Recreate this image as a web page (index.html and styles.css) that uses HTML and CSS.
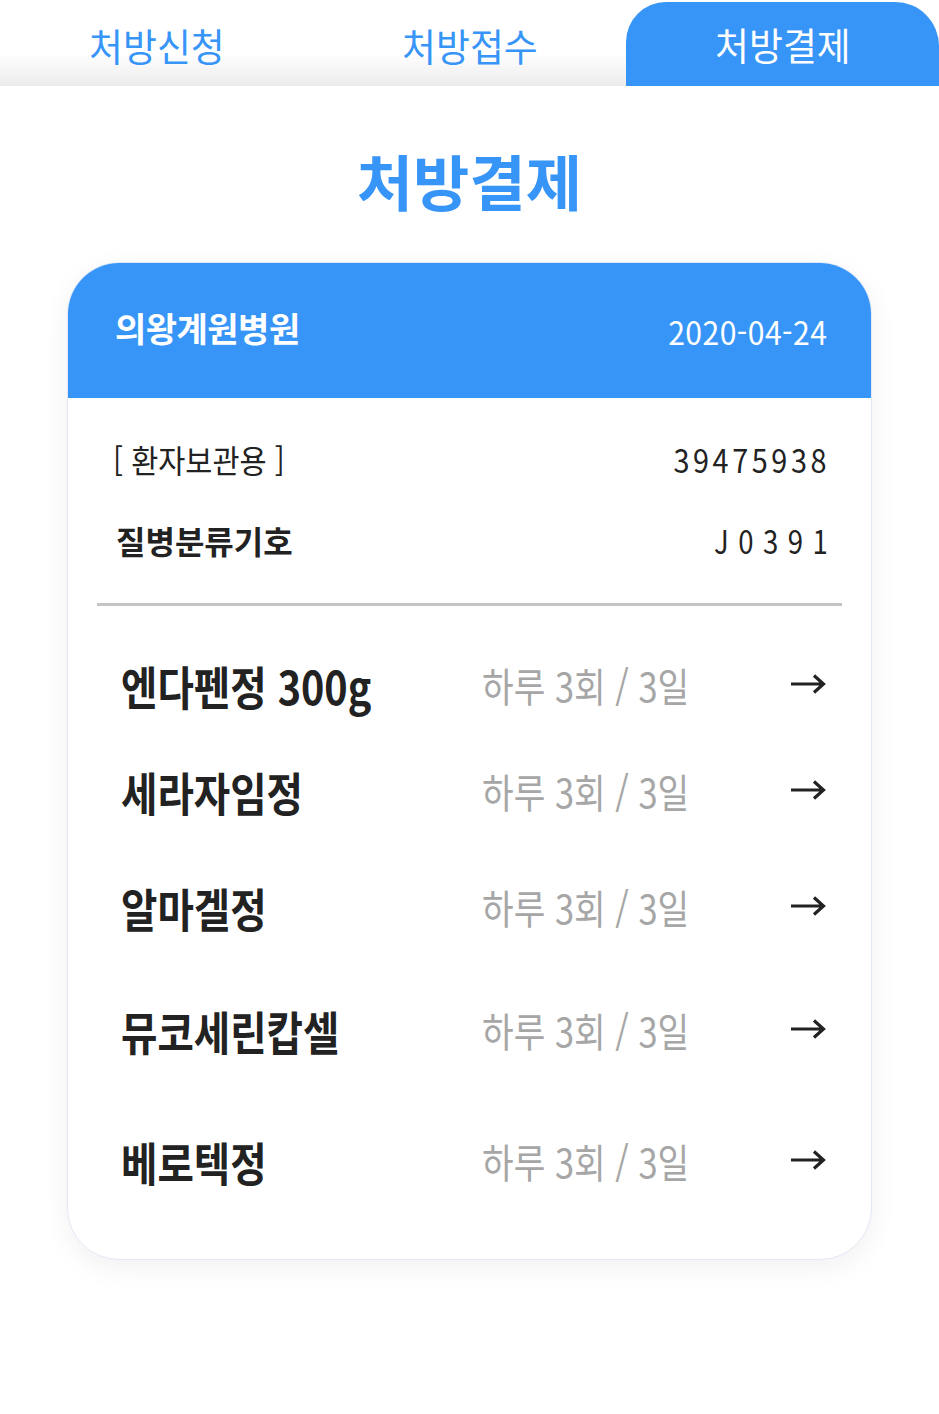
FILE: index.html
```html
<!DOCTYPE html>
<html lang="ko">
<head>
<meta charset="utf-8">
<link rel="stylesheet" href="styles.css">
</head>
<body>
<nav class="tabs">
  <div class="tab"><span class="sq">처방신청</span></div>
  <div class="tab"><span class="sq">처방접수</span></div>
  <div class="tab active"><span class="sq">처방결제</span></div>
</nav>
<h1 class="title"><span class="sq">처방결제</span></h1>
<section class="card">
  <header class="card-head">
    <span class="hosp">의왕계원병원</span>
    <span class="date sq-r">2020-04-24</span>
  </header>
  <div class="info">
    <div class="info-row">
      <span class="label sq-l">[ 환자보관용 ]</span>
      <span class="value num sq-r">39475938</span>
    </div>
    <div class="info-row">
      <span class="label strong">질병분류기호</span>
      <span class="value code sq-r">J0391</span>
    </div>
  </div>
  <hr class="divider">
  <ul class="meds">
    <li class="med r1"><span class="name sq-l">엔다펜정 300g</span><span class="dose sq-l">하루 3회 / 3일</span><svg class="arrow" viewBox="0 0 36 22" width="36" height="22"><path d="M1 11H33M24 2.5L33.5 11L24 19.5" fill="none" stroke="#222" stroke-width="3.2" stroke-linejoin="miter"/></svg></li>
    <li class="med r2"><span class="name sq-l">세라자임정</span><span class="dose sq-l">하루 3회 / 3일</span><svg class="arrow" viewBox="0 0 36 22" width="36" height="22"><path d="M1 11H33M24 2.5L33.5 11L24 19.5" fill="none" stroke="#222" stroke-width="3.2" stroke-linejoin="miter"/></svg></li>
    <li class="med r3"><span class="name sq-l">알마겔정</span><span class="dose sq-l">하루 3회 / 3일</span><svg class="arrow" viewBox="0 0 36 22" width="36" height="22"><path d="M1 11H33M24 2.5L33.5 11L24 19.5" fill="none" stroke="#222" stroke-width="3.2" stroke-linejoin="miter"/></svg></li>
    <li class="med r4"><span class="name sq-l">뮤코세린캅셀</span><span class="dose sq-l">하루 3회 / 3일</span><svg class="arrow" viewBox="0 0 36 22" width="36" height="22"><path d="M1 11H33M24 2.5L33.5 11L24 19.5" fill="none" stroke="#222" stroke-width="3.2" stroke-linejoin="miter"/></svg></li>
    <li class="med r5"><span class="name sq-l">베로텍정</span><span class="dose sq-l">하루 3회 / 3일</span><svg class="arrow" viewBox="0 0 36 22" width="36" height="22"><path d="M1 11H33M24 2.5L33.5 11L24 19.5" fill="none" stroke="#222" stroke-width="3.2" stroke-linejoin="miter"/></svg></li>
  </ul>
</section>
</body>
</html>
```
FILE: styles.css
```css
* { box-sizing: border-box; }
html, body { margin: 0; padding: 0; background: #fff; }
body {
  width: 939px;
  height: 1414px;
  font-family: "Noto Sans CJK KR", "Noto Sans", sans-serif;
  color: #222;
  overflow: hidden;
}
.sq, .sq-l, .sq-r { display: inline-block; transform: scaleX(0.86); }
.sq { transform-origin: center; }
.sq-l { transform-origin: left center; }
.sq-r { transform-origin: right center; }

.tabs {
  display: grid;
  grid-template-columns: 313px 313px 313px;
  height: 86px;
  background: linear-gradient(#ffffff 0%, #ffffff 62%, #ebebeb 100%);
}
.tab {
  display: flex;
  align-items: center;
  justify-content: center;
  padding-top: 4px;
  font-size: 38px;
  color: #3895f8;
  line-height: 1;
}
.tab .sq { transform: scaleX(0.97); }
.tab.active {
  margin-top: 2px;
  background: #3895f8;
  color: #fff;
  border-radius: 40px 44px 0 0 / 40px 44px 0 0;
  padding-top: 0;
}

.title {
  margin: 62px 0 0;
  text-align: center;
  font-size: 60px;
  font-weight: 700;
  color: #3895f8;
  line-height: 64px;
  height: 64px;
}
.title .sq { transform: scaleX(1.02); }

.card {
  margin: 50px 0 0 67px;
  width: 805px;
  height: 998px;
  border: 1px solid #e2e8f7;
  border-radius: 52px;
  box-shadow: 0 8px 28px rgba(0,0,0,0.06);
  overflow: hidden;
  background: #fff;
}
.card-head {
  height: 135px;
  background: #3895f8;
  color: #fff;
  display: flex;
  align-items: center;
  justify-content: space-between;
  padding: 0 44px 0 47px;
}
.hosp { font-size: 34px; font-weight: 700; margin-top: -6px; letter-spacing: -0.5px; }
.date { font-size: 32px; font-weight: 400; letter-spacing: 0.5px; transform: scaleX(0.94); }

.info { padding: 31px 45px 0 45px; }
.info-row {
  display: flex;
  justify-content: space-between;
  align-items: center;
  height: 60px;
  margin-bottom: 21px;
}
.label { font-size: 32px; color: #222; }
.info-row .label.sq-l { transform: scaleX(0.92); }
.label.strong { font-weight: 700; padding-left: 3px; letter-spacing: 0; }
.value { font-size: 32px; color: #222; }
.num { letter-spacing: 4px; margin-right: -4px; transform: scaleX(0.9); }
.code { letter-spacing: 11px; margin-right: -11px; }

.divider {
  margin: 33px 29px 0 29px;
  border: 0;
  height: 3px;
  background: #c4c4c4;
}

.meds { list-style: none; margin: 0; padding: 0 45px 0 53px; }
.med {
  display: flex;
  align-items: center;
  line-height: 1;
}
.r1 { margin-top: 56px; }
.r2 { margin-top: 60px; }
.r3 { margin-top: 70px; }
.r4 { margin-top: 77px; }
.r5 { margin-top: 85px; }
.name {
  width: 362px;
  font-size: 46px;
  font-weight: 700;
  color: #222;
  white-space: nowrap;
}
.dose {
  width: 308px;
  font-size: 40px;
  color: #a6a6a6;
  white-space: nowrap;
}
.arrow { display: block; margin-top: -2px; }
```
